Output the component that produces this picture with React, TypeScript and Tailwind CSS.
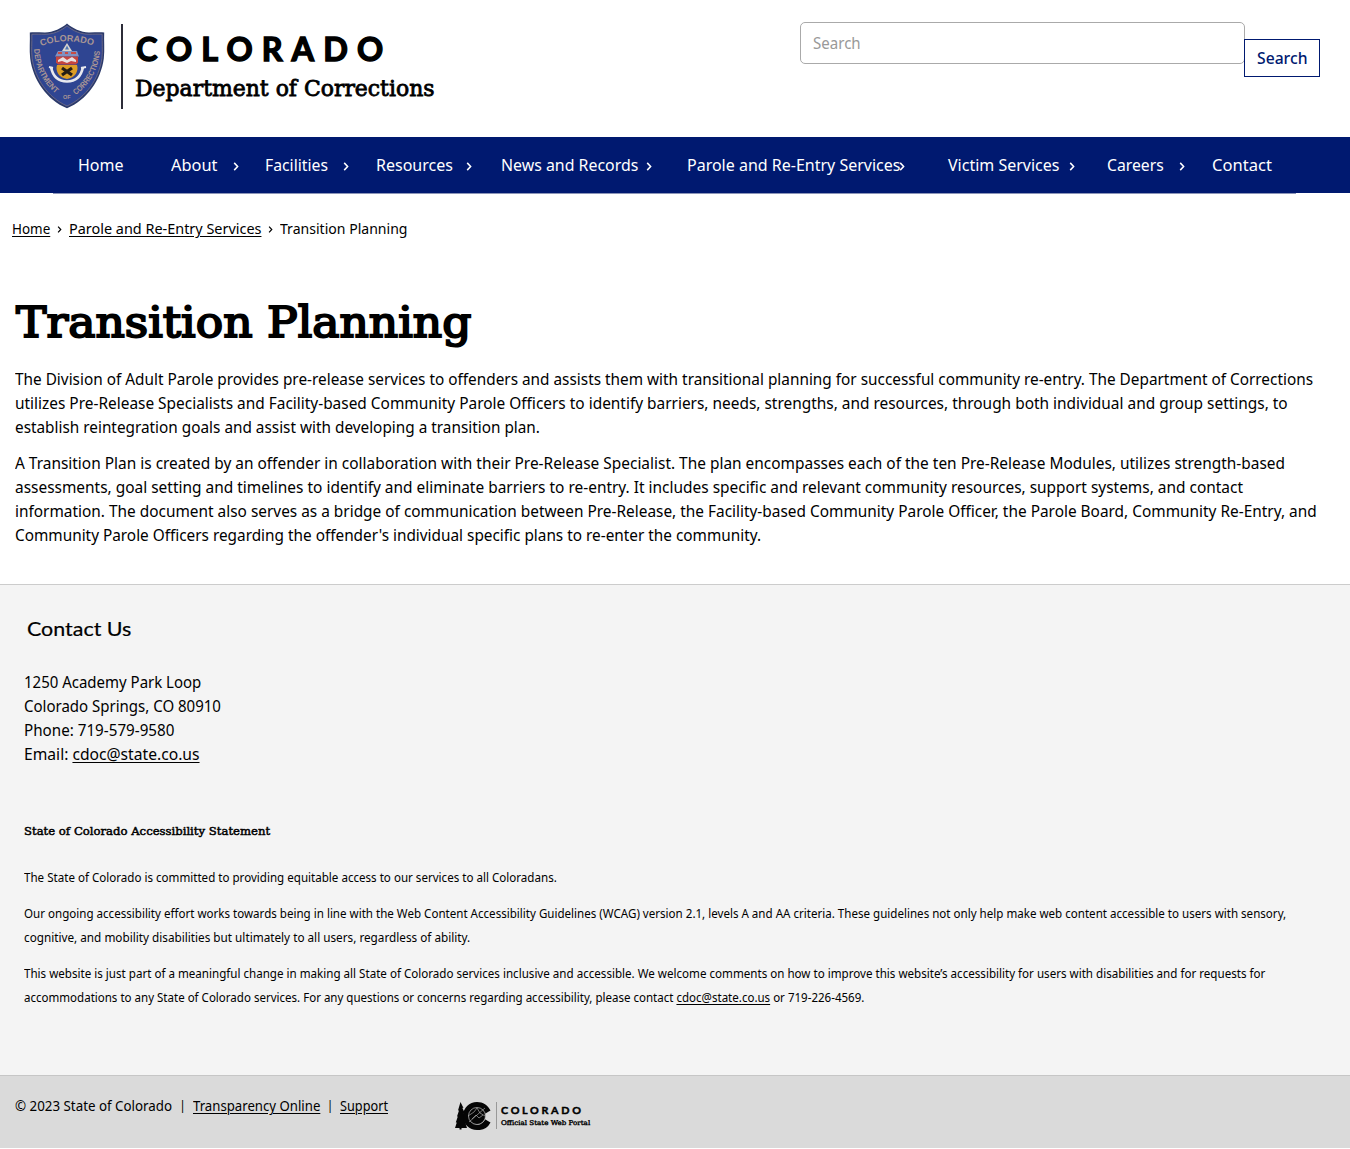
import { useLayoutEffect, useRef, useState } from "react";
import type { ReactNode } from "react";

const SANS = "font-['Noto_Sans',sans-serif]";
const HUMANIST = "font-['Lato',sans-serif]";
const SLAB = "font-['DejaVu_Serif',serif]";

/** A single line of text condensed or widened to fill the width of its box. */
function Fit({ className, children }: { className: string; children: ReactNode }) {
  const box = useRef<HTMLSpanElement>(null);
  const text = useRef<HTMLSpanElement>(null);
  const [scale, setScale] = useState(1);
  useLayoutEffect(() => {
    const measure = () => {
      if (box.current && text.current) setScale(box.current.offsetWidth / text.current.offsetWidth);
    };
    measure();
    document.fonts.ready.then(measure);
  }, []);
  return (
    <span ref={box} className={`block shrink-0 whitespace-nowrap ${className}`}>
      <span ref={text} className="inline-block origin-left" style={{ transform: `scaleX(${scale})` }}>
        {children}
      </span>
    </span>
  );
}

function Chevron({ className }: { className: string }) {
  return (
    <svg viewBox="0 0 6 10" className={`shrink-0 ${className}`} fill="none" stroke="currentColor" strokeWidth="1.7">
      <path d="M1 1l3.800 4L1 9" />
    </svg>
  );
}

function Seal() {
  return (
    <svg viewBox="0 0 76 86" className="h-[86px] w-[76px] shrink-0">
      <path d="M38 .5C33 5 24 9.500 16 9.500 10 9.500 5 9 .8 9.500c.4 8-.6 17 .4 26C4 57 18 77 38 85.300 58 77 72 57 74.800 35.500c1-9 0-18 .4-26-4.200-.5-9.200 0-15.200 0C52 9.500 43 5 38 .5z" fill="#2b3a6b" />
      <path d="M38 2.800C32 8 24 11.300 16 11.300c-5 0-9-.3-13.200 0 .3 8-.6 16 .3 24C6 56 19 74.500 38 83 57 74.500 70 56 72.900 35.300c.9-8 0-16 .3-24-4.200-.3-8.200 0-13.200 0C52 11.300 44 8 38 2.800z" fill="#2f4592" stroke="#75708a" strokeWidth=".8" />
      <defs>
        <path id="seal-top" d="M12 23Q38 13.500 65 23" />
        <path id="seal-left" d="M5 26C6 46 14 61 31 74" />
        <path id="seal-right" d="M46.500 72C61 62 71 45 71 24" />
      </defs>
      <g fill="#a99594" fontFamily="Liberation Sans" fontWeight="700">
        <text fontSize="9"><textPath href="#seal-top" textLength="53" lengthAdjust="spacingAndGlyphs">COLORADO</textPath></text>
        <text fontSize="8"><textPath href="#seal-left" textLength="51" lengthAdjust="spacingAndGlyphs">DEPARTMENT</textPath></text>
        <text fontSize="8"><textPath href="#seal-right" textLength="52" lengthAdjust="spacingAndGlyphs">CORRECTIONS</textPath></text>
        <text fontSize="5.500" x="34" y="76">OF</text>
      </g>
      <path d="M38 20l-5 8h10z" fill="#d9d5ce" />
      <path d="M38 22.500l-2 4h4z" fill="#4f77b4" />
      <path d="M29 28h19l2 5.500H26z" fill="#7f91c2" />
      <path d="M29 30h4M36 30h3M42 30h5" stroke="#c84b43" strokeWidth="2" />
      <path d="M27 33.500h22v6l-2 2H29l-2-2z" fill="#c5453f" />
      <path d="M29 37l5-3 4 3 5-3 4 3v2l-5-1-4 2-5-2-4 1z" fill="#e9dfe0" />
      <path d="M28 42h20c2 6-2 13-10 14-8-1-12-8-10-14z" fill="#dc9d26" />
      <path d="M33 45l10 7M43 45l-10 7" stroke="#251d16" strokeWidth="3.200" />
      <path d="M22 44c2 10 8 14.500 16 14.500s14-4.500 16-14.500" fill="none" stroke="#e8e9ef" strokeWidth="2.600" />
      <path d="M20 44l4 1M52 45l5-1" stroke="#e8e9ef" strokeWidth="2" />
    </svg>
  );
}

function PortalMark() {
  return (
    <svg viewBox="0 0 36 28" className="h-[28px] w-[36px] shrink-0">
      <path d="M5.500 0l3 6-1.200-.2 2.800 6-1.500-.2 3 7-2-.3L12 26H6.500v1.500h-2V26H0l1.800-5.500H.8l2-6H2l2-6H3z" fill="#050505" />
      <path d="M35.500 8.500l-5.500 3.200a8 8 0 100 5.600l5.500 3.200A14 14 0 0122 28 14 14 0 0122 0c6 0 11 3.300 13.500 8.500z" fill="#050505" />
      <circle cx="22" cy="14" r="8.500" fill="#050505" stroke="#c4c4c4" strokeWidth=".7" />
      <path d="M13 14l6-4 3-4 3 5 5 3M14 20l16-14M17 17l4-4 3 3 4-3" fill="none" stroke="#bdbdbd" strokeWidth=".6" />
    </svg>
  );
}

const NAV = [
  { label: "Home", item: "w-[93px]", text: "w-[46px]", chevron: "" },
  { label: "About", item: "w-[94px]", text: "w-[46px]", chevron: "ml-[16px]" },
  { label: "Facilities", item: "w-[111px]", text: "w-[63px]", chevron: "ml-[15px]" },
  { label: "Resources", item: "w-[125px]", text: "w-[77px]", chevron: "ml-[13px]" },
  { label: "News and Records", item: "w-[186px]", text: "w-[137px]", chevron: "ml-[8px]" },
  { label: "Parole and Re-Entry Services", item: "w-[261px]", text: "w-[213px]", chevron: "-ml-px" },
  { label: "Victim Services", item: "w-[159px]", text: "w-[111px]", chevron: "ml-[10px]" },
  { label: "Careers", item: "w-[105px]", text: "w-[57px]", chevron: "ml-[15px]" },
  { label: "Contact", item: "w-[60px]", text: "w-[60px]", chevron: "" },
];

export default function App() {
  return (
    <div className={`h-[1149px] w-[1350px] overflow-hidden bg-white text-black ${SANS}`}>
      <header className="flex h-[137px] items-start">
        <div className="flex pl-[29px] pt-[23px]">
          <Seal />
          <div className="ml-[16px] mt-px h-[85px] w-[1.500px] bg-[#2c2c38]" />
          <div className="ml-[13px]">
            <Fit className={`mt-[7px] h-[38px] w-[256px] text-[32px] font-bold leading-[38px] tracking-[9px] [-webkit-text-stroke:1.400px_black] ${HUMANIST}`}>COLORADO</Fit>
            <Fit className={`-ml-px mt-[5px] h-[32px] w-[300px] text-[22px] leading-[32px] [-webkit-text-stroke:0.800px_black] ${SLAB}`}>Department of Corrections</Fit>
          </div>
        </div>
        <form className="ml-auto mr-[30px] flex pt-[22px]">
          <div className="h-[42px] w-[445px] rounded-[5px] border border-[#aaaaaa] pl-[12px]">
            <Fit className={`h-[40px] w-[48px] text-base leading-[41px] text-[#999] ${SANS}`}>Search</Fit>
          </div>
          <button type="button" className="-ml-px mt-[17px] h-[38px] w-[76px] border border-[#001970] bg-white pl-[12px] text-left text-[#001970]">
            <Fit className={`w-[50px] text-base font-medium leading-[36px] ${SANS}`}>Search</Fit>
          </button>
        </form>
      </header>

      <nav className="h-[56px] bg-[#001970] pl-[78px] text-white">
        <div className="flex h-[56px] items-center">
          {NAV.map((n) => (
            <div key={n.label} className={`flex shrink-0 items-center ${n.item}`}>
              <Fit className={`text-[16px] leading-[24px] ${SANS} ${n.text}`}>{n.label}</Fit>
              {n.chevron && <Chevron className={`mt-[2px] h-[9px] w-[6px] ${n.chevron}`} />}
            </div>
          ))}
        </div>
      </nav>
      <div className="ml-[53px] h-px w-[1243px] bg-[#8c95b8]" />

      <div className="mt-[22px] flex h-[24px] items-center pl-[12px] text-[14.500px] leading-[24px]">
        <Fit className="w-[38px]"><a className="underline underline-offset-2">Home</a></Fit>
        <Chevron className="ml-[7px] mt-[3px] h-[7px] w-[5px]" />
        <Fit className="ml-[7px] w-[192px]"><a className="underline underline-offset-2">Parole and Re-Entry Services</a></Fit>
        <Chevron className="ml-[7px] mt-[3px] h-[7px] w-[5px]" />
        <Fit className="ml-[7px] w-[128px]">Transition Planning</Fit>
      </div>

      <main className="h-[344px] pl-[15px] pt-[52px]">
        <h1>
          <Fit className={`ml-px h-[60px] w-[455px] text-[43px] leading-[60px] [-webkit-text-stroke:2px_black] ${SLAB}`}>Transition Planning</Fit>
        </h1>
        <div className="mt-[15px] text-base leading-6">
          <Fit className="h-6 w-[1298px]">The Division of Adult Parole provides pre-release services to offenders and assists them with transitional planning for successful community re-entry. The Department of Corrections</Fit>
          <Fit className="h-6 w-[1273px]">utilizes Pre-Release Specialists and Facility-based Community Parole Officers to identify barriers, needs, strengths, and resources, through both individual and group settings, to</Fit>
          <Fit className="h-6 w-[525px]">establish reintegration goals and assist with developing a transition plan.</Fit>
        </div>
        <div className="mt-3 text-base leading-6">
          <Fit className="h-6 w-[1270px]">A Transition Plan is created by an offender in collaboration with their Pre-Release Specialist. The plan encompasses each of the ten Pre-Release Modules, utilizes strength-based</Fit>
          <Fit className="h-6 w-[1228px]">assessments, goal setting and timelines to identify and eliminate barriers to re-entry. It includes specific and relevant community resources, support systems, and contact</Fit>
          <Fit className="h-6 w-[1302px]">information. The document also serves as a bridge of communication between Pre-Release, the Facility-based Community Parole Officer, the Parole Board, Community Re-Entry, and</Fit>
          <Fit className="h-6 w-[746px]">Community Parole Officers regarding the offender's individual specific plans to re-enter the community.</Fit>
        </div>
      </main>

      <section className="h-[491px] border-t border-[#cccccc] bg-[#f4f4f4] pl-[24px] pt-[28px]">
        <h2>
          <Fit className={`ml-[3px] h-[30px] w-[104px] text-[20px] leading-[30px] [-webkit-text-stroke:0.200px_black] ${HUMANIST}`}>Contact Us</Fit>
        </h2>
        <address className="mt-[27px] text-base not-italic leading-6">
          <Fit className="h-6 w-[177px]">1250 Academy Park Loop</Fit>
          <Fit className="h-6 w-[197px]">Colorado Springs, CO 80910</Fit>
          <Fit className="h-6 w-[150px]">Phone: 719-579-9580</Fit>
          <Fit className="h-6 w-[176px]">Email: <a className="underline underline-offset-2">cdoc@state.co.us</a></Fit>
        </address>
        <h3>
          <Fit className={`mt-[53px] h-6 w-[246px] text-[11.500px] leading-6 [-webkit-text-stroke:0.500px_black] ${SLAB}`}>State of Colorado Accessibility Statement</Fit>
        </h3>
        <div className="mt-[23px] text-[12px] leading-6">
          <Fit className="h-6 w-[533px]">The State of Colorado is committed to providing equitable access to our services to all Coloradans.</Fit>
          <Fit className="mt-3 h-6 w-[1262px]">Our ongoing accessibility effort works towards being in line with the Web Content Accessibility Guidelines (WCAG) version 2.1, levels A and AA criteria. These guidelines not only help make web content accessible to users with sensory,</Fit>
          <Fit className="h-6 w-[446px]">cognitive, and mobility disabilities but ultimately to all users, regardless of ability.</Fit>
          <Fit className="mt-3 h-6 w-[1241px]">This website is just part of a meaningful change in making all State of Colorado services inclusive and accessible. We welcome comments on how to improve this website’s accessibility for users with disabilities and for requests for</Fit>
          <Fit className="h-6 w-[840px]">accommodations to any State of Colorado services. For any questions or concerns regarding accessibility, please contact <a className="underline underline-offset-2">cdoc@state.co.us</a> or 719-226-4569.</Fit>
        </div>
      </section>

      <footer className="flex h-[73px] items-start border-t border-[#c6c6c6] bg-[#dadada] pl-[15px]">
        <div className="flex pt-[18px] text-[13.500px] leading-6">
          <Fit className="w-[157px]">© 2023 State of Colorado</Fit>
          <span className="w-[21px] text-center text-[12px]">|</span>
          <Fit className="w-[127px]"><a className="underline underline-offset-2">Transparency Online</a></Fit>
          <span className="w-[20px] text-center text-[12px]">|</span>
          <Fit className="w-[48px]"><a className="underline underline-offset-2">Support</a></Fit>
        </div>
        <div className="ml-[67px] flex pt-[26px]">
          <PortalMark />
          <div className="ml-[5px] h-[27px] w-px bg-[#999]" />
          <div className="ml-[4px]">
            <Fit className={`mt-[2px] h-[12px] w-[83px] text-[10px] font-bold leading-[12px] tracking-[2.500px] [-webkit-text-stroke:0.400px_black] ${HUMANIST}`}>COLORADO</Fit>
            <Fit className={`mt-[3px] h-[9px] w-[89px] text-[6.500px] leading-[9px] [-webkit-text-stroke:0.350px_black] ${SLAB}`}>Official State Web Portal</Fit>
          </div>
        </div>
      </footer>
    </div>
  );
}
